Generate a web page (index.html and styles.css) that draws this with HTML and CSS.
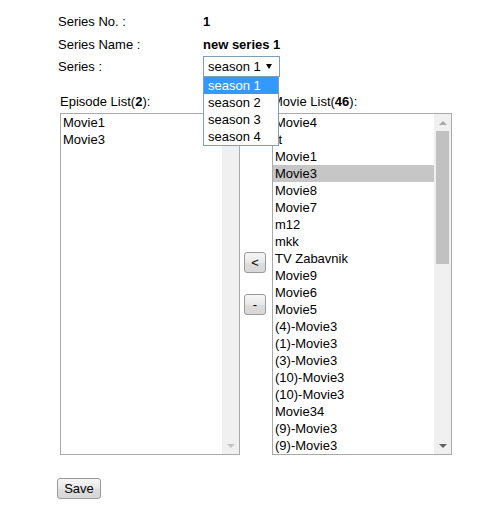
FILE: index.html
```html
<!DOCTYPE html>
<html>
<head>
<meta charset="utf-8">
<title>Series</title>
<link rel="stylesheet" href="styles.css">
</head>
<body>
<div class="page">
  <div class="info">
    <div class="label">Series No. :</div>
    <div class="value">1</div>
    <div class="label">Series Name :</div>
    <div class="value">new series 1</div>
    <div class="label">Series :</div>
    <div class="value">
      <div class="select">
        <div class="select-box"><span>season 1</span><span class="caret"></span></div>
        <ul class="dropdown">
          <li class="active">season 1</li>
          <li>season 2</li>
          <li>season 3</li>
          <li>season 4</li>
        </ul>
      </div>
    </div>
  </div>

  <div class="lists">
    <div class="col">
      <div class="list-title">Episode List(<b>2</b>):</div>
      <div class="listbox">
        <ul class="items">
          <li>Movie1</li>
          <li>Movie3</li>
        </ul>
        <div class="scrollbar disabled">
          <div class="sb-btn"><span class="arrow up"></span></div>
          <div class="track"></div>
          <div class="sb-btn"><span class="arrow down"></span></div>
        </div>
      </div>
    </div>

    <div class="mid">
      <button class="btn small">&lt;</button>
      <button class="btn small">-</button>
    </div>

    <div class="col">
      <div class="list-title">Movie List(<b>46</b>):</div>
      <div class="listbox">
        <ul class="items">
          <li>Movie4</li>
          <li>tt</li>
          <li>Movie1</li>
          <li class="selected">Movie3</li>
          <li>Movie8</li>
          <li>Movie7</li>
          <li>m12</li>
          <li>mkk</li>
          <li>TV Zabavnik</li>
          <li>Movie9</li>
          <li>Movie6</li>
          <li>Movie5</li>
          <li>(4)-Movie3</li>
          <li>(1)-Movie3</li>
          <li>(3)-Movie3</li>
          <li>(10)-Movie3</li>
          <li>(10)-Movie3</li>
          <li>Movie34</li>
          <li>(9)-Movie3</li>
          <li>(9)-Movie3</li>
        </ul>
        <div class="scrollbar">
          <div class="sb-btn"><span class="arrow up off"></span></div>
          <div class="track"><div class="thumb"></div></div>
          <div class="sb-btn"><span class="arrow down"></span></div>
        </div>
      </div>
    </div>
  </div>

  <div class="actions">
    <button class="btn save">Save</button>
  </div>
</div>
</body>
</html>
```

FILE: styles.css
```css
body {
  margin: 0;
  background: #ffffff;
  color: #000000;
  font-family: "Liberation Sans", Arial, sans-serif;
  font-size: 13px;
}

.page {
  padding: 10px 0 0 57px;
}

.info {
  display: grid;
  grid-template-columns: 145px auto;
  grid-template-rows: 23px 23px 21px;
  align-items: center;
  margin-left: 1px;
  line-height: 15px;
}

.value {
  font-weight: bold;
}

.select {
  position: relative;
  width: 77px;
  height: 21px;
  font-weight: normal;
}

.select-box {
  box-sizing: border-box;
  height: 21px;
  border: 1px solid #7f9db9;
  display: flex;
  align-items: center;
  justify-content: space-between;
  padding: 0 7px 0 4px;
  background: #ffffff;
}

.caret {
  width: 0;
  height: 0;
  border-left: 3px solid transparent;
  border-right: 3px solid transparent;
  border-top: 5px solid #000000;
}

.dropdown {
  position: absolute;
  top: 20px;
  left: 0;
  z-index: 10;
  box-sizing: border-box;
  width: 76px;
  margin: 0;
  padding: 0;
  list-style: none;
  border: 1px solid #7f9db9;
  background: #ffffff;
}

.dropdown li {
  height: 17px;
  line-height: 17px;
  padding-left: 4px;
}

.dropdown li.active {
  background: #3399ff;
  color: #ffffff;
}

.lists {
  display: flex;
  margin-top: 16px;
  margin-left: 3px;
}

.col {
  width: 180px;
}

.list-title {
  line-height: 17px;
  margin-bottom: 3px;
}

.listbox {
  box-sizing: border-box;
  height: 342px;
  border: 1px solid #a9a9a9;
  display: flex;
  background: #ffffff;
}

.items {
  flex: 1;
  margin: 0;
  padding: 0;
  list-style: none;
  overflow: hidden;
}

.items li {
  height: 17px;
  line-height: 17px;
  padding-left: 2px;
  white-space: nowrap;
}

.items li.selected {
  background: #c6c6c6;
}

.scrollbar {
  width: 17px;
  background: #f0f0f0;
  display: flex;
  flex-direction: column;
}

.sb-btn {
  height: 17px;
  display: flex;
  align-items: center;
  justify-content: center;
}

.track {
  flex: 1;
}

.thumb {
  height: 133px;
  margin: 0 2px;
  background: #c1c1c1;
}

.arrow {
  width: 0;
  height: 0;
  border-left: 4px solid transparent;
  border-right: 4px solid transparent;
}

.arrow.up {
  border-bottom: 4px solid #606060;
}

.arrow.down {
  border-top: 4px solid #606060;
}

.arrow.up.off {
  border-bottom-color: #a8a8a8;
}

.scrollbar.disabled .arrow.up {
  border-bottom-color: #c3c3c3;
}

.scrollbar.disabled .arrow.down {
  border-top-color: #c3c3c3;
}

.mid {
  box-sizing: border-box;
  width: 32px;
  display: flex;
  flex-direction: column;
  align-items: flex-start;
  gap: 21px;
  padding: 159px 0 0 4px;
}

.btn {
  font-family: "Liberation Sans", Arial, sans-serif;
  font-size: 13px;
  color: #000000;
  height: 21px;
  padding: 0;
  border: 1px solid #9a9a9a;
  border-radius: 3px;
  background: linear-gradient(#f6f6f6, #e8e8e8 50%, #dcdcdc 51%, #d8d8d8);
}

.btn.small {
  width: 22px;
}

.actions {
  margin-top: 23px;
}

.btn.save {
  width: 44px;
}
```
